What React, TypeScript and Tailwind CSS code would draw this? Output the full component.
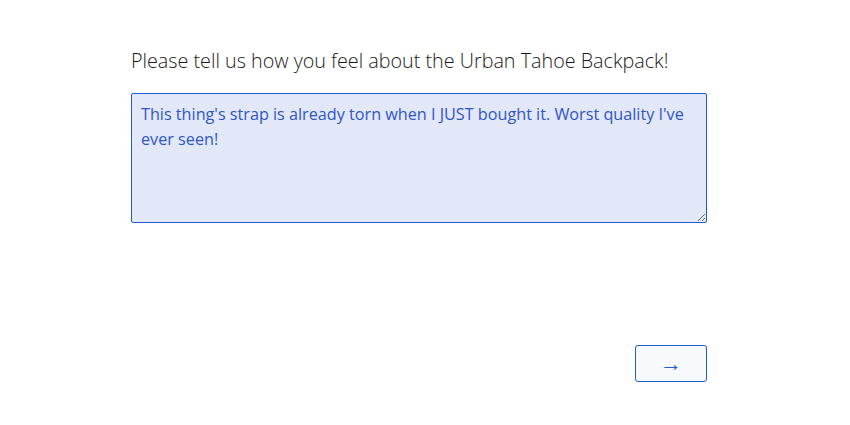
export default function App() {
  return (
    <div className="min-h-[425px] w-[850px] bg-white font-['Open_Sans',sans-serif]">
      <div className="pl-[131px] pt-[47px] w-[707px]">
        <h1 className="text-[19.75px] leading-[28px] font-light text-[#1a1a1a]">
          Please tell us how you feel about the Urban Tahoe Backpack!
        </h1>
        <textarea
          className="mt-[18px] block w-[576px] h-[130px] rounded-[2px] border border-[#1f5bd6] bg-[#e2e8f7] pl-[9px] pr-[9px] pt-[8px] pb-[6px] text-[16.2px] leading-[25px] text-[#2f55c8] outline-none resize-y"
          defaultValue="This thing's strap is already torn when I JUST bought it. Worst quality I've ever seen!"
        />
        <div className="mt-[122px] flex justify-end">
          <button className="w-[72px] h-[37px] rounded-[3px] border border-[#1f5bd6] bg-[#f7f9fd] text-[#1f5bd6] text-[22px] leading-none pb-[4px]">
            →
          </button>
        </div>
      </div>
    </div>
  );
}
